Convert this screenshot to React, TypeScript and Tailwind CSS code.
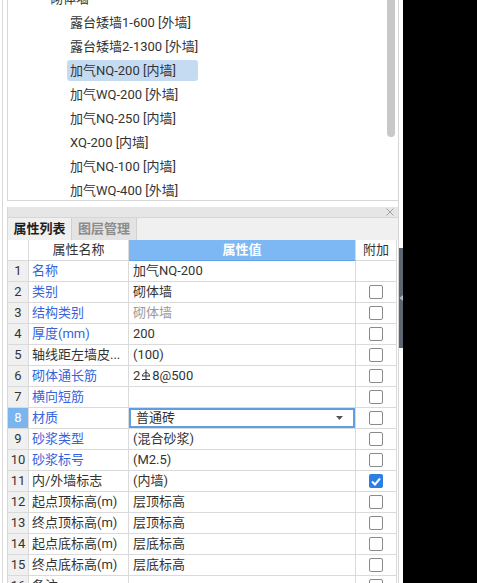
import clsx from "clsx";

type TreeItem = { text: string; parent?: boolean; selected?: boolean };

const treeItems: TreeItem[] = [
  { text: "砌体墙", parent: true },
  { text: "露台矮墙1-600 [外墙]" },
  { text: "露台矮墙2-1300 [外墙]" },
  { text: "加气NQ-200 [内墙]", selected: true },
  { text: "加气WQ-200 [外墙]" },
  { text: "加气NQ-250 [内墙]" },
  { text: "XQ-200 [内墙]" },
  { text: "加气NQ-100 [内墙]" },
  { text: "加气WQ-400 [外墙]" },
];

type PropRow = {
  no: number;
  name: string;
  link: boolean;
  value?: string;
  muted?: boolean;
  kind?: "select" | "rebar";
  check?: "none" | "off" | "on";
};

const propRows: PropRow[] = [
  { no: 1, name: "名称", link: true, value: "加气NQ-200", check: "none" },
  { no: 2, name: "类别", link: true, value: "砌体墙" },
  { no: 3, name: "结构类别", link: true, value: "砌体墙", muted: true },
  { no: 4, name: "厚度(mm)", link: true, value: "200" },
  { no: 5, name: "轴线距左墙皮...", link: false, value: "(100)" },
  { no: 6, name: "砌体通长筋", link: true, kind: "rebar" },
  { no: 7, name: "横向短筋", link: true, value: "" },
  { no: 8, name: "材质", link: true, value: "普通砖", kind: "select" },
  { no: 9, name: "砂浆类型", link: true, value: "(混合砂浆)" },
  { no: 10, name: "砂浆标号", link: true, value: "(M2.5)" },
  { no: 11, name: "内/外墙标志", link: false, value: "(内墙)", check: "on" },
  { no: 12, name: "起点顶标高(m)", link: false, value: "层顶标高" },
  { no: 13, name: "终点顶标高(m)", link: false, value: "层顶标高" },
  { no: 14, name: "起点底标高(m)", link: false, value: "层底标高" },
  { no: 15, name: "终点底标高(m)", link: false, value: "层底标高" },
  { no: 16, name: "备注", link: false, value: "" },
];

// grade-III rebar glyph, no font has it
function RebarMark() {
  return (
    <svg width="10" height="12" viewBox="0 0 10 12" className="mx-[1px] mb-[2px] inline-block" fill="none" stroke="#333" strokeWidth="1">
      <path d="M5 0.5V11" />
      <path d="M1.5 7C1.5 2.5 8.5 2.5 8.5 7" />
      <path d="M1 7H9" />
      <path d="M1 10.5H9" />
    </svg>
  );
}

function CheckBox({ on }: { on: boolean }) {
  if (on) {
    return (
      <div className="flex h-[14px] w-[14px] items-center justify-center rounded-[2px] bg-[#2b7fe3]">
        <svg width="10" height="9" viewBox="0 0 10 9" fill="none" stroke="white" strokeWidth="2">
          <path d="M1 4.5L4 7.5L9 1.5" />
        </svg>
      </div>
    );
  }
  return <div className="h-[14px] w-[14px] rounded-[2px] border border-[#8a8a8a] bg-white" />;
}

function TreePanel() {
  return (
    <div className="flex h-[201px] shrink-0 overflow-hidden border-b border-l border-[#d6d6d6]">
      <div className="mt-[-14px] w-[379px] flex-none">
        {treeItems.map((it) => (
          <div key={it.text} className="flex h-[24px] items-center">
            <span
              className={clsx(
                "h-[21px] pl-[3px] leading-[21px] whitespace-nowrap",
                it.parent ? "ml-[39px]" : "ml-[59px] w-[131px]",
                it.selected && "rounded-[3px] bg-[#c5dbf2]"
              )}
            >
              {it.text}
            </span>
          </div>
        ))}
      </div>
      <div className="h-[137px] w-[8px] flex-none rounded-b-[4px] bg-[#c8c8c8]" />
    </div>
  );
}

function PropTable() {
  const cell = "border-b border-r border-[#dadada] h-[21px] flex items-center";
  return (
    <div className="grid grid-cols-[21px_100px_227px_41px]">
      <div className={clsx(cell, "bg-white")} />
      <div className={clsx(cell, "justify-center bg-white text-[#333]")}>属性名称</div>
      <div className={clsx(cell, "justify-center bg-[#7db8f4] font-bold text-white border-b-[#64a3ea]")}>属性值</div>
      <div className={clsx(cell, "justify-center bg-white text-[#333]")}>附加</div>

      {propRows.map((r) => {
        const sel = r.kind === "select";
        return (
          <div key={r.no} className="contents">
            <div className={clsx(cell, "justify-center", sel ? "bg-[#7ab5ee] text-white" : "bg-[#f0f0f0] text-[#333]")}>
              {r.no}
            </div>
            <div className={clsx(cell, "pl-[3px] whitespace-nowrap", r.link ? "text-[#3563dc]" : "text-[#333]")}>
              {r.name}
            </div>
            {sel ? (
              <div className="flex h-[21px] items-center justify-between border-b border-r border-[#dadada]">
                <div className="flex h-full w-full items-center justify-between border-2 border-[#5e9fe4] pl-[5px] pr-[10px] text-[#333]">
                  <span>{r.value}</span>
                  <svg width="7" height="4" viewBox="0 0 7 4">
                    <path d="M0 0H7L3.5 4Z" fill="#555" />
                  </svg>
                </div>
              </div>
            ) : (
              <div className={clsx(cell, "pl-[4px] whitespace-nowrap", r.muted ? "text-[#9a9a9a]" : "text-[#333]")}>
                {r.kind === "rebar" ? (
                  <span className="flex items-center">
                    2<RebarMark />8@500
                  </span>
                ) : (
                  r.value
                )}
              </div>
            )}
            <div className={clsx(cell, "justify-center bg-white")}>
              {r.check !== "none" && <CheckBox on={r.check === "on"} />}
            </div>
          </div>
        );
      })}
    </div>
  );
}

function PropPanel() {
  return (
    <div className="flex min-h-0 flex-1 flex-col border-l border-[#d6d6d6]">
      <div className="flex h-[11px] shrink-0 items-center justify-end border-b border-[#d6d6d6] bg-[#e6e6e6] pr-[4px]">
        <svg width="8" height="8" viewBox="0 0 8 8" stroke="#a0a0a0" strokeWidth="1">
          <path d="M0.5 0.5L7.5 7.5M7.5 0.5L0.5 7.5" />
        </svg>
      </div>
      <div className="flex h-[22px] shrink-0 bg-[#f0f0f0]">
        <div className="flex w-[64px] items-center justify-center border-r border-[#d0d0d0] bg-[#f0f0f0] font-bold text-[#1e1e1e]">
          属性列表
        </div>
        <div className="flex w-[65px] items-center justify-center border-r border-[#d0d0d0] bg-[#e3e3e3] font-bold text-[#8c8c8c]">
          图层管理
        </div>
      </div>
      <div className="min-h-0 flex-1 overflow-hidden">
        <PropTable />
      </div>
    </div>
  );
}

export default function App() {
  return (
    <div className="flex h-[583px] w-[477px] overflow-hidden bg-black font-['Segoe_UI',Roboto,'Noto_Sans_CJK_SC',sans-serif] text-[13px] text-[#333]">
      <div className="flex h-full w-[403px] flex-none bg-white">
        <div className="w-[2px] flex-none" />
        <div className="w-px flex-none bg-[#d9d9d9]" />
        <div className="w-[4px] flex-none" />
        <div className="flex h-full w-[392px] flex-none flex-col border-r border-[#d6d6d6]">
          <TreePanel />
          <div className="h-[6px] shrink-0" />
          <PropPanel />
        </div>
        <div className="flex w-[4px] flex-none flex-col">
          <div className="mt-[248px] flex h-[100px] items-center bg-[#5d6670]">
            <svg width="4" height="6" viewBox="0 0 4 6">
              <path d="M4 0V6L0.5 3Z" fill="#b8bec4" />
            </svg>
          </div>
        </div>
      </div>
    </div>
  );
}
